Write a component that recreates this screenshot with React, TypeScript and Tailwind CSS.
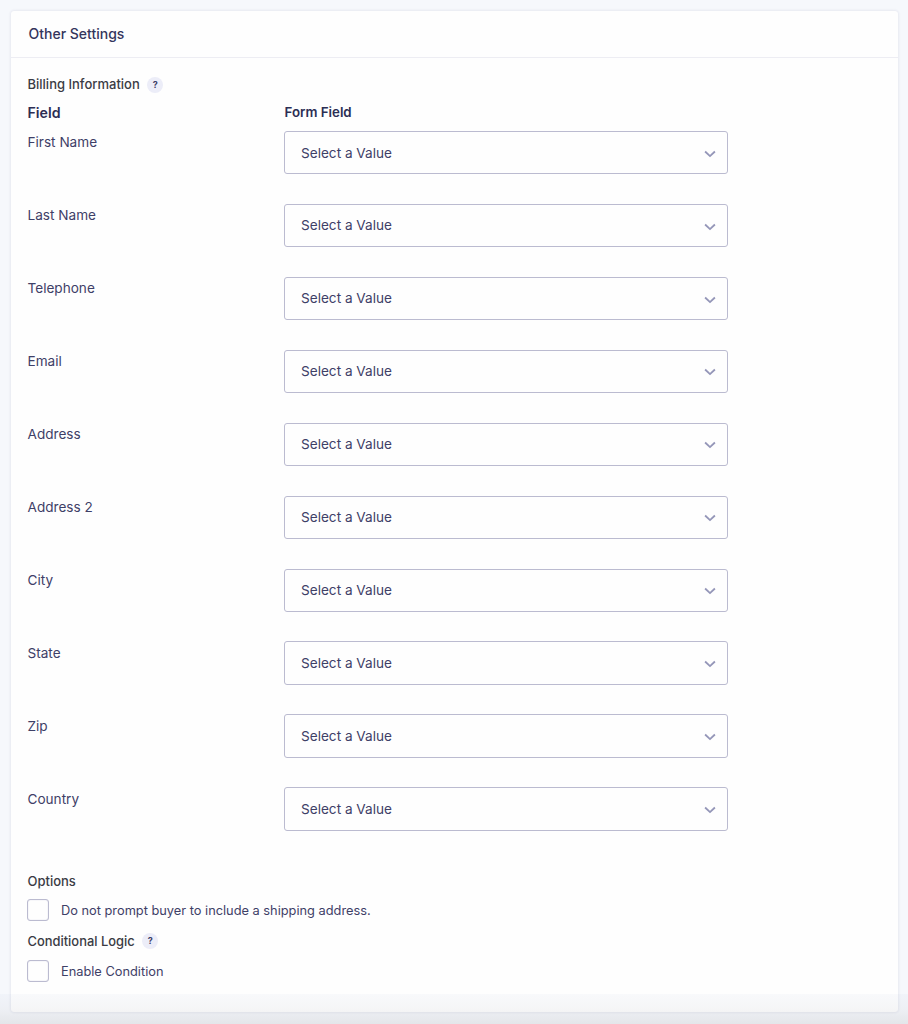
import { useState } from "react";

const billingFields = [
  "First Name",
  "Last Name",
  "Telephone",
  "Email",
  "Address",
  "Address 2",
  "City",
  "State",
  "Zip",
  "Country",
];

function HelpBadge() {
  return (
    <button
      type="button"
      className="mb-px ml-[7.5px] flex h-4 w-4 items-center justify-center rounded-full bg-[#ecedf8] text-[9px] font-bold leading-none text-[#3e4067]"
    >
      ?
    </button>
  );
}

function SelectField() {
  return (
    <button
      type="button"
      className="flex h-[43.4px] w-[444px] items-center justify-between rounded-[3px] border border-[#bbbbd0] bg-[#fefefe] pl-4 pr-[11.5px] text-left text-[13.6px] text-[#3e4067]"
    >
      <span>Select a Value</span>
      <svg width="12" height="8" viewBox="0 0 12 8" fill="none" className="mt-[2px]">
        <path d="M1.1 1.5 6 6.1l4.9-4.6" stroke="#9496b8" strokeWidth="1.8" />
      </svg>
    </button>
  );
}

function CheckField({ label }: { label: string }) {
  const [checked, setChecked] = useState(false);

  return (
    <label className="flex h-[22px] items-center text-[12.8px] text-[#3e4067]">
      <input
        type="checkbox"
        checked={checked}
        onChange={(e) => setChecked(e.target.checked)}
        className="h-[22px] w-[22px] appearance-none rounded-[3px] border border-[#bbbbd0] bg-[#fefefe] shadow-[inset_0_0_1px_#b9b9d2] checked:bg-[#3e7da6]"
      />
      <span className="ml-3 pt-px">{label}</span>
    </label>
  );
}

export default function App() {
  return (
    <main className="relative h-[1024px] overflow-hidden bg-[#f6f8fc] pl-[11px] pr-[10px] pt-[11px] font-['Inter','Liberation_Sans',sans-serif]">
      <section className="h-[1001px] rounded-[3px] bg-[#fefefe] shadow-[0_0_3px_rgba(40,40,100,0.14)]">
        <h2 className="flex h-[47px] items-center border-b border-[#ededf3] pb-px pl-[17.5px] text-[14px] font-medium text-[#34355c]">
          Other Settings
        </h2>

        <div className="pl-4 pt-[17px]">
          <div className="flex h-5 items-center pl-[0.5px] text-[13px] font-medium text-[#3a3b44]">
            Billing Information
            <HelpBadge />
          </div>

          <div className="mt-[7px] grid h-5 grid-cols-[257px_444px] items-center font-semibold text-[#2c2e54]">
            <span className="pl-[0.5px] text-[14.2px]">Field</span>
            <span className="pl-[0.5px] text-[13.3px]">Form Field</span>
          </div>

          <div className="mt-[9px]">
            {billingFields.map((field) => (
              <div key={field} className="grid h-[72.93px] grid-cols-[257px_444px] items-start">
                <span className="pl-[0.5px] pt-[1.4px] text-[13.6px] leading-5 text-[#3e4067]">{field}</span>
                <SelectField />
              </div>
            ))}
          </div>

          <h3 className="mt-[10.7px] pl-[0.5px] text-[13px] font-medium leading-5 text-[#3a3b44]">Options</h3>
          <div className="mt-2">
            <CheckField label="Do not prompt buyer to include a shipping address." />
          </div>

          <div className="mt-[10.5px] flex h-5 items-center pl-[0.5px] text-[12.9px] font-medium text-[#3a3b44]">
            Conditional Logic
            <HelpBadge />
          </div>
          <div className="mt-[8.5px]">
            <CheckField label="Enable Condition" />
          </div>
        </div>
      </section>

      {/* fade over the bottom edge of the page */}
      <div className="pointer-events-none absolute inset-x-0 bottom-0 h-[30px] bg-linear-to-b from-[#4060b0]/3 via-[#505468]/5 to-[#404040]/10" />
    </main>
  );
}
